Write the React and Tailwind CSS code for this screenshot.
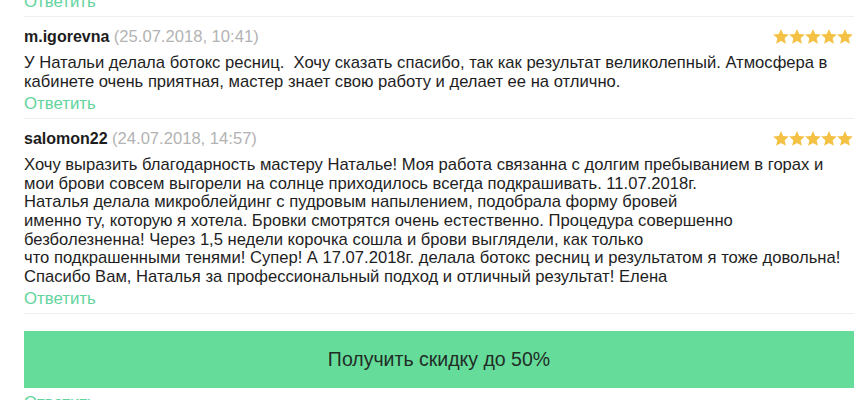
import React from "react";

const reviews = [
  {
    user: "m.igorevna",
    date: "(25.07.2018, 10:41)",
    lines: [
      "У Натальи делала ботокс ресниц.  Хочу сказать спасибо, так как результат великолепный. Атмосфера в",
      "кабинете очень приятная, мастер знает свою работу и делает ее на отлично.",
    ],
  },
  {
    user: "salomon22",
    date: "(24.07.2018, 14:57)",
    lines: [
      "Хочу выразить благодарность мастеру Наталье! Моя работа связанна с долгим пребыванием в горах и",
      "мои брови совсем выгорели на солнце приходилось всегда подкрашивать. 11.07.2018г.",
      "Наталья делала микроблейдинг с пудровым напылением, подобрала форму бровей",
      "именно ту, которую я хотела. Бровки смотрятся очень естественно. Процедура совершенно",
      "безболезненна! Через 1,5 недели корочка сошла и брови выглядели, как только",
      "что подкрашенными тенями! Супер! А 17.07.2018г. делала ботокс ресниц и результатом я тоже довольна!",
      "Спасибо Вам, Наталья за профессиональный подход и отличный результат! Елена",
    ],
  },
];

function Star() {
  return (
    <svg width="16" height="15" viewBox="0 0 24 23" className="block">
      <path
        d="M12 0l3.4 7.5 8.6 0.9-6.4 5.8 1.8 8.4L12 18.3l-7.4 4.3 1.8-8.4L0 8.4l8.6-0.9z"
        fill="#f5c144"
      />
    </svg>
  );
}

function Reply() {
  return (
    <div className="text-[16.8px] leading-[20px] text-[#62d49c]">Ответить</div>
  );
}

function Review({ r }) {
  return (
    <div className="border-t border-[#efefef] pt-[9px] pb-[4px]">
      <div className="flex h-[22px] items-center justify-between">
        <div className="text-[16px] leading-[20px]">
          <span className="font-bold text-[#1c1c1c]">{r.user}</span>{" "}
          <span className="text-[16.6px] text-[#b3b3b3]">{r.date}</span>
        </div>
        <div className="flex -mt-[1px] pr-[1px]">
          <Star />
          <Star />
          <Star />
          <Star />
          <Star />
        </div>
      </div>
      <div className="mt-[6px] text-[16.6px] leading-[18.6px] text-[#1e1e1e]">
        {r.lines.map((l, i) => (
          <div key={i} className="whitespace-pre">
            {l}
          </div>
        ))}
      </div>
      <div className="mt-[3px]">
        <Reply />
      </div>
    </div>
  );
}

export default function App() {
  return (
    <div
      className="h-[400px] w-[866px] overflow-hidden bg-white pl-6 pr-3"
      style={{ fontFamily: '"Liberation Sans", Arial, sans-serif' }}
    >
      <div className="-mt-[8px] pb-[4px]">
        <Reply />
      </div>
      {reviews.map((r) => (
        <Review key={r.user} r={r} />
      ))}
      <div className="border-t border-[#efefef] pt-[17px]">
        <button className="flex h-[57px] w-full items-center justify-center bg-[#66dc9b] text-[19.5px] text-[#1f2e26]">
          Получить скидку до 50%
        </button>
      </div>
      <div className="mt-[5px]">
        <Reply />
      </div>
    </div>
  );
}
